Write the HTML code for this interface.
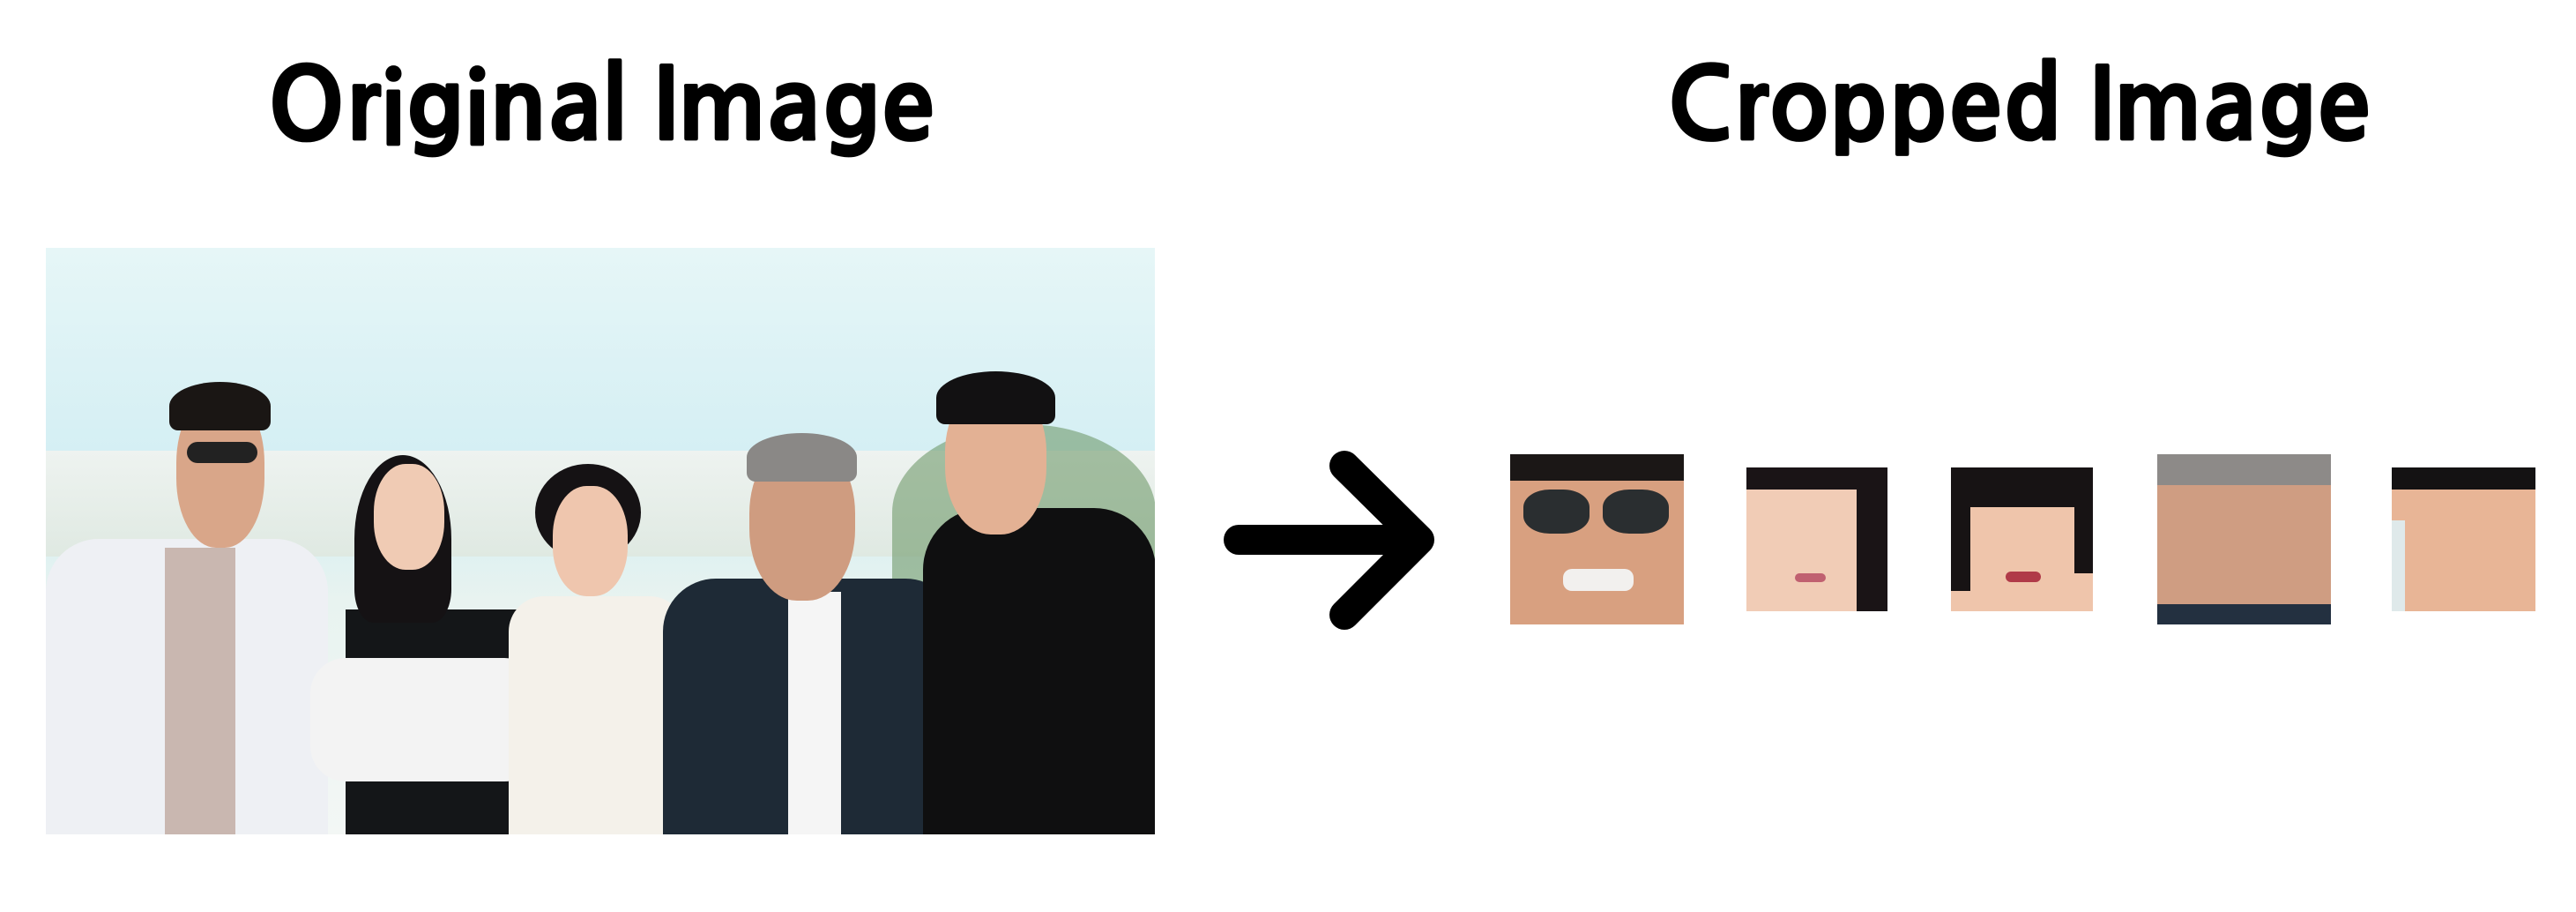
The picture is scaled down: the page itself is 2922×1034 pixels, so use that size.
<!DOCTYPE html>
<html><head><meta charset="utf-8"><style>
html,body{margin:0;padding:0;background:#fff;width:2922px;height:1034px;overflow:hidden}
.t{position:absolute;font-family:"NanumGothic","Liberation Sans",sans-serif;font-weight:800;font-size:112px;color:#000;white-space:nowrap;transform:translateX(-50%);top:64px;line-height:1;-webkit-text-stroke:0.8px #000}
.photo{position:absolute;left:52px;top:281px;width:1258px;height:665px;overflow:hidden;background:linear-gradient(#e6f6f7 0%,#d2eef3 40%,#e8f3f0 60%,#f3f7f5 100%)}
.p{position:absolute}
.face{position:absolute;overflow:hidden;background:#e2b49a}
</style></head><body>
<div class="t" style="left:682px">Original Image</div>
<div class="t" style="left:2290px">Cropped Image</div>

<div class="photo">
 <div class="p" style="left:0;top:230px;width:1259px;height:120px;background:linear-gradient(#eef3f0,#dfe9e2)"></div>
 <div class="p" style="left:960px;top:200px;width:299px;height:200px;background:#6f9a6a;border-radius:50% 50% 0 0;opacity:.6"></div>
 <div class="p" style="left:0;top:330px;width:320px;height:340px;background:#eef0f4;border-radius:60px 60px 0 0"></div>
 <div class="p" style="left:135px;top:340px;width:80px;height:330px;background:#c9b7b0"></div>
 <div class="p" style="left:148px;top:165px;width:100px;height:175px;background:#d9a689;border-radius:45%"></div>
 <div class="p" style="left:140px;top:152px;width:115px;height:55px;background:#1a1614;border-radius:50% 50% 10px 10px"></div>
 <div class="p" style="left:160px;top:220px;width:80px;height:24px;background:#222;border-radius:12px"></div>
 <div class="p" style="left:340px;top:410px;width:220px;height:260px;background:#141618"></div>
 <div class="p" style="left:300px;top:465px;width:260px;height:140px;background:#f3f3f3;border-radius:40px"></div>
 <div class="p" style="left:350px;top:235px;width:110px;height:190px;background:#151214;border-radius:50% 50% 20% 20%"></div>
 <div class="p" style="left:372px;top:245px;width:80px;height:120px;background:#f0cbb4;border-radius:45%"></div>
 <div class="p" style="left:525px;top:395px;width:200px;height:275px;background:#f4f1ea;border-radius:40px 40px 0 0"></div>
 <div class="p" style="left:555px;top:245px;width:120px;height:110px;background:#151214;border-radius:50%"></div>
 <div class="p" style="left:575px;top:270px;width:85px;height:125px;background:#efc6ae;border-radius:45%"></div>
 <div class="p" style="left:700px;top:375px;width:335px;height:295px;background:#1e2a36;border-radius:60px 60px 0 0"></div>
 <div class="p" style="left:842px;top:390px;width:60px;height:280px;background:#f5f5f5"></div>
 <div class="p" style="left:798px;top:220px;width:120px;height:180px;background:#cf9c80;border-radius:45%"></div>
 <div class="p" style="left:795px;top:210px;width:125px;height:55px;background:#8a8886;border-radius:50% 50% 10px 10px"></div>
 <div class="p" style="left:995px;top:295px;width:264px;height:375px;background:#0f0f10;border-radius:70px 70px 0 0"></div>
 <div class="p" style="left:1020px;top:155px;width:115px;height:170px;background:#e3b194;border-radius:45%"></div>
 <div class="p" style="left:1010px;top:140px;width:135px;height:60px;background:#121112;border-radius:50% 50% 10px 10px"></div>
</div>

<svg style="position:absolute;left:0;top:0" width="2922" height="1034">
 <g stroke="#000" stroke-width="34" stroke-linecap="round" stroke-linejoin="round" fill="none">
  <line x1="1405" y1="612" x2="1605" y2="612"/>
  <polyline points="1525,528 1610,612 1525,697"/>
 </g>
</svg>

<div class="face" style="left:1713px;top:515px;width:197px;height:193px;background:#d8a080">
 <div class="p" style="left:0;top:0;width:197px;height:30px;background:#1b1716"></div>
 <div class="p" style="left:15px;top:40px;width:75px;height:50px;background:#2a2e30;border-radius:40%"></div>
 <div class="p" style="left:105px;top:40px;width:75px;height:50px;background:#2a2e30;border-radius:40%"></div>
 <div class="p" style="left:60px;top:130px;width:80px;height:25px;background:#f2f0ee;border-radius:10px"></div>
</div>
<div class="face" style="left:1981px;top:530px;width:160px;height:163px;background:#f1ccb6">
 <div class="p" style="left:0;top:0;width:160px;height:25px;background:#1a1416"></div>
 <div class="p" style="left:125px;top:0;width:35px;height:163px;background:#1a1416"></div>
 <div class="p" style="left:55px;top:120px;width:35px;height:10px;background:#c06070;border-radius:5px"></div>
</div>
<div class="face" style="left:2213px;top:530px;width:161px;height:163px;background:#efc5ab">
 <div class="p" style="left:0;top:0;width:161px;height:45px;background:#171314"></div>
 <div class="p" style="left:0;top:0;width:22px;height:140px;background:#171314"></div>
 <div class="p" style="left:140px;top:0;width:21px;height:120px;background:#171314"></div>
 <div class="p" style="left:62px;top:118px;width:40px;height:12px;background:#b03a48;border-radius:6px"></div>
</div>
<div class="face" style="left:2447px;top:515px;width:197px;height:193px;background:#cf9d82">
 <div class="p" style="left:0;top:0;width:197px;height:35px;background:#8d8a88"></div>
 <div class="p" style="left:0;top:170px;width:197px;height:23px;background:#233040"></div>
</div>
<div class="face" style="left:2713px;top:530px;width:163px;height:163px;background:#e8b596">
 <div class="p" style="left:0;top:0;width:163px;height:25px;background:#141213"></div>
 <div class="p" style="left:0;top:60px;width:15px;height:103px;background:#dfe9ea"></div>
</div>
</body></html>
